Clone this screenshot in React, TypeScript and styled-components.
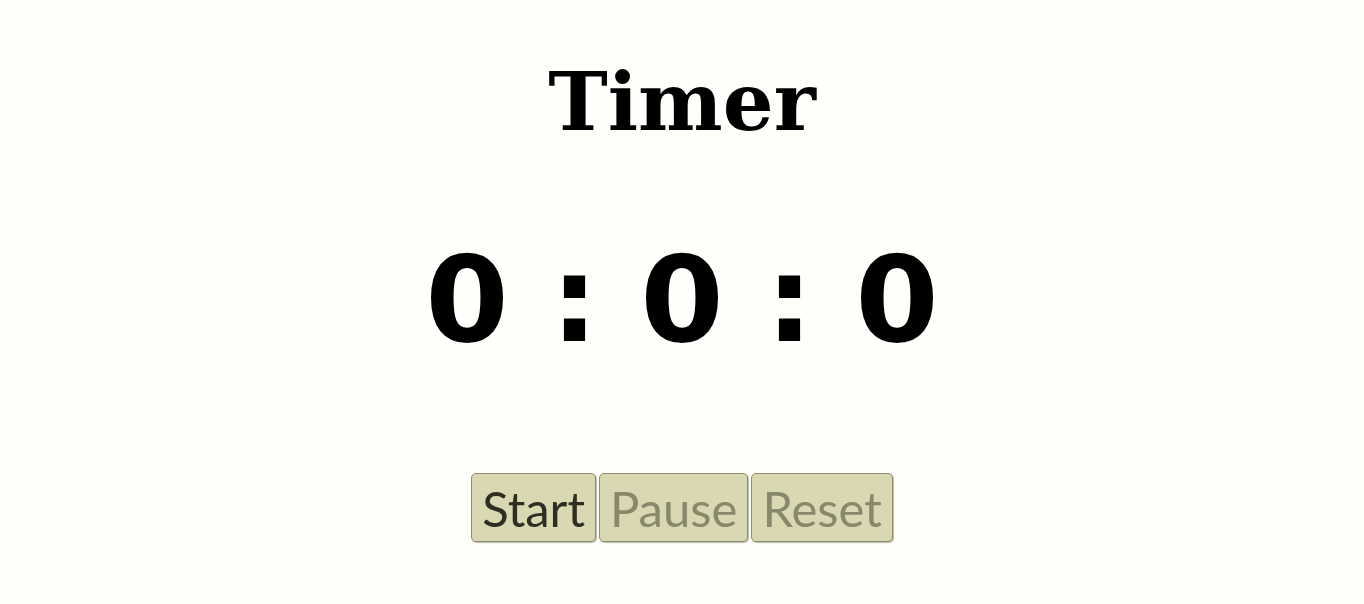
import React from "react";
import styled, { createGlobalStyle } from "styled-components";

const Global = createGlobalStyle`
  html, body { margin: 0; padding: 0; background: #fefefa; }
  body { font-family: "DejaVu Serif", serif; }
`;

const Page = styled.main`
  display: flex;
  flex-direction: column;
  align-items: center;
  padding-top: 56px;
  min-height: 604px;
  box-sizing: border-box;
`;

const Title = styled.h1`
  margin: 0;
  font-family: "DejaVu Serif", serif;
  font-weight: bold;
  font-size: 80px;
  line-height: 93px;
  color: #000;
`;

const Clock = styled.div`
  margin-top: 81px;
  font-family: "DejaVu Sans", sans-serif;
  font-weight: bold;
  font-size: 120px;
  line-height: 140px;
  color: #000;
  white-space: pre;
`;

const Controls = styled.div`
  margin-top: 103px;
  display: flex;
  gap: 3px;
`;

const Button = styled.button<{ $active?: boolean }>`
  font-family: "Lato", sans-serif;
  font-size: 49px;
  line-height: 64px;
  padding: 0 10px 0 10px;
  height: 69px;
  background: #d9d8b2;
  color: ${(p) => (p.$active ? "#2e2e22" : "#88886a")};
  border: 1px solid #8d8c6c;
  border-radius: 5px;
  box-shadow: 1px 1px 1px rgba(60, 60, 40, 0.35);
  cursor: ${(p) => (p.$active ? "pointer" : "default")};
`;

export default function App() {
  return (
    <>
      <Global />
      <Page>
        <Title>Timer</Title>
        <Clock>0 : 0 : 0</Clock>
        <Controls>
          <Button $active>Start</Button>
          <Button disabled>Pause</Button>
          <Button disabled>Reset</Button>
        </Controls>
      </Page>
    </>
  );
}
